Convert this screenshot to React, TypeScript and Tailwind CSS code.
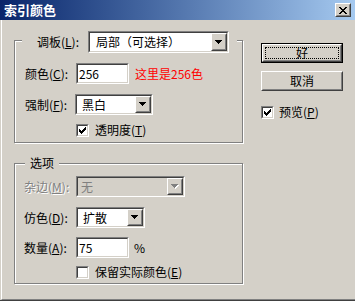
const FONT = { fontFamily: '"Noto Sans CJK SC", "DejaVu Sans", sans-serif' };

function Check() {
  const cols = [2, 3, 4, 3, 2, 1, 0];
  return (
    <svg width="7" height="7" viewBox="0 0 7 7" shapeRendering="crispEdges">
      {cols.map((y, x) => (
        <rect key={x} x={x} y={y} width="1" height="3" fill="#000" />
      ))}
    </svg>
  );
}

function Arrow({ disabled }: { disabled?: boolean }) {
  const rows = [7, 5, 3, 1];
  return (
    <svg width="8" height="5" viewBox="0 0 8 5" shapeRendering="crispEdges">
      {disabled &&
        rows.map((w, i) => (
          <rect key={'s' + i} x={i + 1} y={i + 1} width={w} height="1" fill="#fff" />
        ))}
      {rows.map((w, i) => (
        <rect key={i} x={i} y={i} width={w} height="1" fill={disabled ? '#808080' : '#000'} />
      ))}
    </svg>
  );
}

function CloseX() {
  const px: [number, number][] = [];
  const pattern = ['XX....XX', '.XX..XX.', '..XXXX..', '...XX...', '..XXXX..', '.XX..XX.', 'XX....XX'];
  pattern.forEach((row, y) => row.split('').forEach((c, x) => c === 'X' && px.push([x, y])));
  return (
    <svg width="8" height="7" viewBox="0 0 8 7" shapeRendering="crispEdges">
      {px.map(([x, y]) => (
        <rect key={x + '-' + y} x={x} y={y} width="1" height="1" fill="#000" />
      ))}
    </svg>
  );
}

function Sunken({ className, children, inner }: { className: string; children?: React.ReactNode; inner?: string }) {
  return (
    <div className={`border border-t-[#808080] border-l-[#808080] border-r-white border-b-white ${className}`}>
      <div className={`h-full border border-t-[#404040] border-l-[#404040] border-r-[#d4d0c8] border-b-[#d4d0c8] ${inner ?? 'bg-white'}`}>
        {children}
      </div>
    </div>
  );
}

function Raised({ className, children }: { className: string; children?: React.ReactNode }) {
  return (
    <div className={`border border-t-white border-l-white border-r-[#404040] border-b-[#404040] bg-[#d4d0c8] ${className}`}>
      <div className="h-full flex items-center justify-center border border-t-[#d4d0c8] border-l-[#d4d0c8] border-r-[#808080] border-b-[#808080]">
        {children}
      </div>
    </div>
  );
}

function Combo({ w, h, text, pl, disabled }: { w: string; h: string; text: string; pl: string; disabled?: boolean }) {
  return (
    <Sunken className={`${w} ${h}`} inner={disabled ? 'bg-[#d4d0c8]' : 'bg-white'}>
      <div className="h-full flex items-stretch">
        <div className={`flex-1 flex items-center ${pl} ${disabled ? 'text-[#808080]' : 'text-black'}`}>{text}</div>
        <Raised className="w-[16px]">
          <Arrow disabled={disabled} />
        </Raised>
      </div>
    </Sunken>
  );
}

function CheckBox({ checked }: { checked?: boolean }) {
  return (
    <Sunken className="w-[13px] h-[13px]">
      <div className="h-full flex items-center justify-center">{checked && <Check />}</div>
    </Sunken>
  );
}

function Label({ main, k, w, disabled }: { main: string; k: string; w: string; disabled?: boolean }) {
  return (
    <span
      className={`${w} shrink-0 ${disabled ? 'text-[#808080] [text-shadow:1px_1px_0_#fff]' : 'text-black'}`}
    >
      {main}(<u>{k}</u>):
    </span>
  );
}

export default function App() {
  return (
    <div
      className="w-[355px] h-[301px] overflow-hidden bg-[#d4d0c8] flex flex-col text-[12px] leading-[14px] border-b border-[#404040]"
      style={FONT}
    >
      <div className="h-[20px] shrink-0 flex items-center justify-between pl-[4px] pr-[4px] bg-gradient-to-r from-[#0a246a] to-[#a6caf0]">
        <span className="text-white font-bold text-[13px]">索引颜色</span>
        <Raised className="w-[16px] h-[14px]">
          <CloseX />
        </Raised>
      </div>

      <div className="flex-1 flex ml-px border-l border-white border-b border-b-[#808080]">
        <div className="ml-[12px] mt-[20px] flex flex-col">
          <div className="w-[229px] h-[103px] border border-[#808080] shadow-[inset_1px_1px_0_#fff,1px_1px_0_#fff] flex flex-col">
            <div className="-mt-[10px] ml-[7px] self-start h-[22px] flex items-center bg-[#d4d0c8] pl-[15px] pr-[8px]">
              <Label main="调板" k="L" w="w-[51px]" />
              <Combo w="w-[141px]" h="h-[22px]" text="局部（可选择）" pl="pl-[6px]" />
            </div>
            <div className="mt-[10px] pl-[10px] flex items-center">
              <Label main="颜色" k="C" w="w-[51px]" />
              <Sunken className="w-[53px] h-[21px]">
                <div className="h-full flex items-center pl-px">256</div>
              </Sunken>
              <span className="ml-[6px] text-[#ff0000]">这里是256色</span>
            </div>
            <div className="mt-[10px] pl-[10px] flex items-center">
              <Label main="强制" k="F" w="w-[50px]" />
              <Combo w="w-[78px]" h="h-[21px]" text="黑白" pl="pl-[5px]" />
            </div>
            <div className="mt-[8px] pl-[61px] flex items-center">
              <CheckBox checked />
              <span className="ml-[6px]">
                透明度(<u>T</u>)
              </span>
            </div>
          </div>

          <div className="mt-[20px] w-[229px] h-[121px] border border-[#808080] shadow-[inset_1px_1px_0_#fff,1px_1px_0_#fff] flex flex-col">
            <div className="-mt-[8px] ml-[10px] self-start px-[5px] bg-[#d4d0c8]">选项</div>
            <div className="mt-[6px] pl-[9px] flex items-center">
              <Label main="杂边" k="M" w="w-[52px]" disabled />
              <Combo w="w-[109px]" h="h-[21px]" text="无" pl="pl-[3px]" disabled />
            </div>
            <div className="mt-[10px] pl-[9px] flex items-center">
              <Label main="仿色" k="D" w="w-[52px]" />
              <Combo w="w-[69px]" h="h-[21px]" text="扩散" pl="pl-[5px]" />
            </div>
            <div className="mt-[9px] pl-[9px] flex items-center">
              <Label main="数量" k="A" w="w-[52px]" />
              <Sunken className="w-[53px] h-[21px]">
                <div className="h-full flex items-center pl-px">75</div>
              </Sunken>
              <span className="ml-[5px]">%</span>
            </div>
            <div className="mt-[7px] pl-[61px] flex items-center">
              <CheckBox />
              <span className="ml-[6px]">
                保留实际颜色(<u>E</u>)
              </span>
            </div>
          </div>
        </div>

        <div className="ml-[18px] mt-[23px] flex flex-col">
          <div className="w-[82px] h-[20px] border border-black flex">
            <div className="flex-1 border border-t-white border-l-white border-r-[#404040] border-b-[#404040] bg-[#d4d0c8] flex">
              <div className="flex-1 border border-t-[#d4d0c8] border-l-[#d4d0c8] border-r-[#808080] border-b-[#808080] p-px flex">
                <div className="flex-1 border border-dotted border-black flex items-center justify-center">好</div>
              </div>
            </div>
          </div>
          <Raised className="mt-[8px] w-[82px] h-[20px]">取消</Raised>
          <div className="mt-[14px] flex items-center">
            <CheckBox checked />
            <span className="ml-[5px]">
              预览(<u>P</u>)
            </span>
          </div>
        </div>
      </div>
    </div>
  );
}
